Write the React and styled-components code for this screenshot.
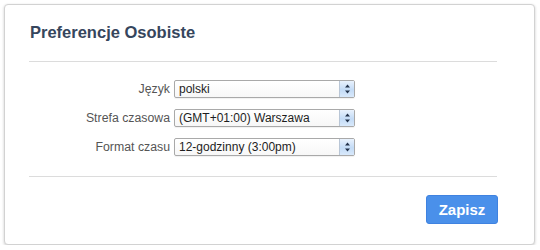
import React from "react";
import styled, { createGlobalStyle } from "styled-components";

const Global = createGlobalStyle`
  html, body { margin: 0; padding: 0; background: #ffffff; }
  body { font-family: "Liberation Sans", Arial, Helvetica, sans-serif; }
`;

const Panel = styled.div`
  box-sizing: border-box;
  margin: 4px 0 0 4px;
  width: 531px;
  height: 241px;
  background: #fff;
  border: 1px solid #d2d2d2;
  border-radius: 4px;
  box-shadow: 0 1px 3px rgba(0, 0, 0, 0.2);
  padding: 17px 37px 0 24px;
  display: flex;
  flex-direction: column;
`;

const Title = styled.h2`
  margin: 0;
  font-size: 16.5px;
  line-height: 20px;
  font-weight: bold;
  color: #36465d;
  padding-left: 1px;
`;

const Divider = styled.hr`
  border: 0;
  height: 1px;
  background: #dcdcdc;
  margin: ${(p) => p.$m};
`;

const Form = styled.div`
  display: grid;
  grid-template-columns: 141px 181px;
  column-gap: 4px;
  row-gap: 11px;
  align-items: center;
`;

const Label = styled.label`
  text-align: right;
  font-size: 12.3px;
  color: #555555;
  line-height: 18px;
`;

const Select = styled.div`
  box-sizing: border-box;
  height: 18px;
  display: flex;
  align-items: stretch;
  border: 1px solid #a9a9a9;
  border-radius: 2px;
  background: linear-gradient(#ffffff, #f7f7f7);
  box-shadow: 0 1px 1px rgba(0, 0, 0, 0.06);
`;

const Value = styled.span`
  flex: 1;
  padding-left: 4px;
  font-size: 12px;
  line-height: 16px;
  color: #1e1e1e;
  white-space: nowrap;
  overflow: hidden;
`;

const Stepper = styled.span`
  width: 14px;
  border-left: 1px solid #b9c6d6;
  background: linear-gradient(#e9f2fd, #c3dbf6 55%, #d9e9fb);
  display: flex;
  align-items: center;
  justify-content: center;
`;

const Footer = styled.div`
  display: flex;
  justify-content: flex-end;
`;

const Button = styled.button`
  width: 72px;
  height: 29px;
  border: 1px solid #3f82e0;
  border-radius: 3px;
  background: #4a90ea;
  color: #fff;
  font-family: "Liberation Sans", Arial, sans-serif;
  font-weight: bold;
  font-size: 15px;
  padding: 0;
  margin-right: -1px;
`;

const Arrows = () => (
  <svg width="7" height="10" viewBox="0 0 7 10">
    <path d="M3.5 0.5 L6 3.5 L1 3.5 Z" fill="#23324a" />
    <path d="M1 6.5 L6 6.5 L3.5 9.5 Z" fill="#23324a" />
  </svg>
);

const rows = [
  ["Język", "polski"],
  ["Strefa czasowa", "(GMT+01:00) Warszawa"],
  ["Format czasu", "12-godzinny (3:00pm)"],
];

export default function App() {
  return (
    <>
      <Global />
      <Panel>
        <Title>Preferencje Osobiste</Title>
        <Divider $m="19px 0 18px" />
        <Form>
          {rows.map(([l, v]) => (
            <React.Fragment key={l}>
              <Label>{l}</Label>
              <Select>
                <Value>{v}</Value>
                <Stepper>
                  <Arrows />
                </Stepper>
              </Select>
            </React.Fragment>
          ))}
        </Form>
        <Divider $m="20px 0 18px" />
        <Footer>
          <Button>Zapisz</Button>
        </Footer>
      </Panel>
    </>
  );
}
